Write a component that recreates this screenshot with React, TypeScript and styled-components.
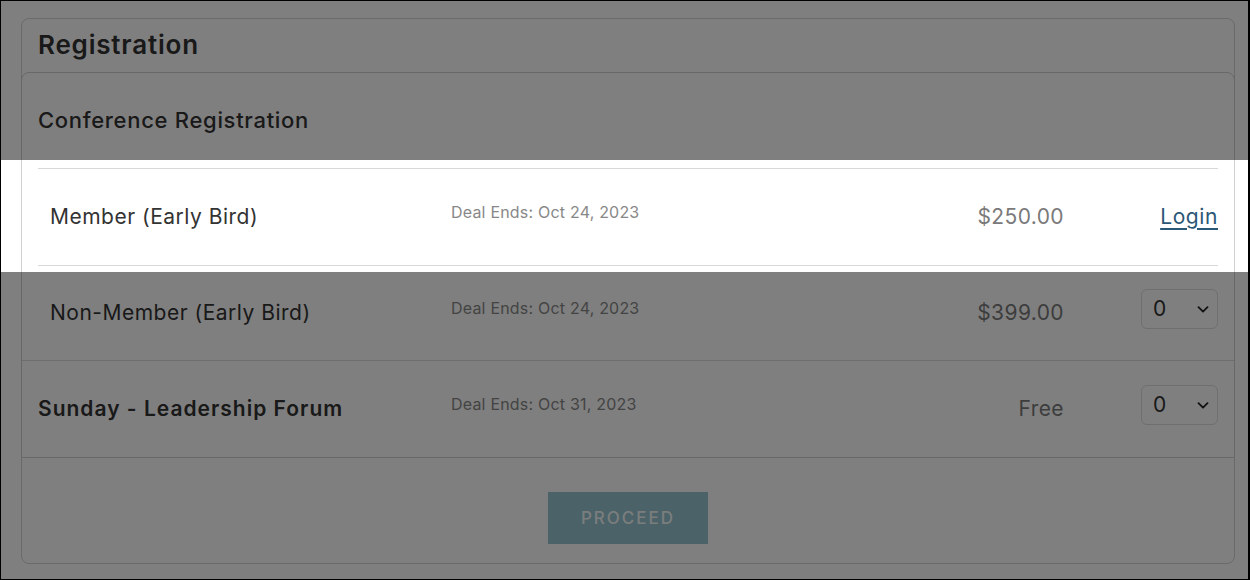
import styled, { createGlobalStyle } from 'styled-components';

const GlobalStyle = createGlobalStyle`
  html, body {
    margin: 0;
    padding: 0;
    background: #fff;
  }
  body {
    font-family: Inter, "Noto Sans", Arial, sans-serif;
    color: #333;
  }
  * {
    box-sizing: border-box;
  }
`;

// Page frame
const Frame = styled.div`
  position: relative;
  width: 1250px;
  height: 580px;
  overflow: hidden;
  border: 1px solid #000;
  border-right-width: 2px;
  background: #fff;
  padding: 17px 13px 0 20px;
`;

// Tour spotlight: dims everything but the highlighted strip
const Spotlight = styled.div`
  position: absolute;
  left: 0;
  right: 0;
  top: 159px;
  height: 112px;
  box-shadow: 0 0 0 2000px rgba(0, 0, 0, 0.5);
  pointer-events: none;
  z-index: 10;
`;

const OuterCard = styled.div`
  border: 1px solid #d4d4d4;
  border-radius: 8px;
  height: 546px;
  display: flex;
  flex-direction: column;
`;

const CardTitle = styled.h1`
  margin: 0;
  padding: 11px 16px 12px;
  font-size: 26px;
  line-height: 30px;
  font-weight: 600;
  letter-spacing: 0.8px;
  color: #333;
`;

const InnerCard = styled.div`
  margin: 0 -1px;
  border: 1px solid #d0d0d0;
  border-radius: 8px 8px 0 0;
`;

const Section = styled.div<{ $last?: boolean }>`
  border-bottom: ${(p) => (p.$last ? 'none' : '1px solid #dcdcdc')};
`;

const SectionHeader = styled.div`
  height: 95px;
  padding: 0 16px 2px;
  display: flex;
  align-items: center;
  font-size: 22px;
  font-weight: 500;
  letter-spacing: 0.7px;
  color: #333;
`;

const TicketList = styled.div`
  padding: 0 16px;
`;

const TicketRow = styled.div<{ $lined?: boolean; $height: number }>`
  display: grid;
  grid-template-columns: 413px 1fr 180px 154px;
  align-items: center;
  height: ${(p) => p.$height}px;
  padding-bottom: 2px;
  border-top: ${(p) => (p.$lined ? '1px solid #d8d8d8' : 'none')};
`;

const TicketName = styled.div<{ $bold?: boolean }>`
  padding-left: ${(p) => (p.$bold ? '0' : '12px')};
  font-size: 21px;
  font-weight: ${(p) => (p.$bold ? 600 : 400)};
  color: #333;
  letter-spacing: ${(p) => (p.$bold ? '1px' : '0.5px')};
`;

const DealEnds = styled.div`
  font-size: 16px;
  color: #888;
  letter-spacing: 0.2px;
  margin-bottom: 8px;
`;

const Price = styled.div`
  text-align: right;
  font-size: 21px;
  letter-spacing: 0.4px;
  color: #7a7a7a;
`;

const Action = styled.div`
  display: flex;
  justify-content: flex-end;
`;

const LoginLink = styled.a`
  font-size: 21px;
  letter-spacing: 0.6px;
  color: #2b5876;
  text-decoration: underline;
  text-decoration-thickness: 2px;
  text-underline-offset: 4px;
  cursor: pointer;
`;

const SelectWrap = styled.div`
  position: relative;
  width: 77px;
  height: 40px;
  margin-bottom: 6px;
`;

const Select = styled.select`
  appearance: none;
  width: 100%;
  height: 100%;
  border: 1px solid #dedede;
  border-radius: 6px;
  background: #fff;
  padding: 0 0 2px 11px;
  font-family: inherit;
  font-size: 21px;
  color: #333;
`;

const Chevron = styled.svg`
  position: absolute;
  right: 9px;
  top: 17px;
  pointer-events: none;
`;

const Footer = styled.div`
  flex: 1;
  display: flex;
  justify-content: center;
  padding-top: 34px;
`;

const ProceedButton = styled.button`
  width: 160px;
  height: 52px;
  border: none;
  background: #94c5d1;
  color: #f6fafb;
  font-family: inherit;
  font-size: 17px;
  font-weight: 500;
  letter-spacing: 2px;
`;

const QtySelect = () => (
  <SelectWrap>
    <Select defaultValue="0">
      <option value="0">0</option>
      <option value="1">1</option>
      <option value="2">2</option>
    </Select>
    <Chevron width="12" height="7" viewBox="0 0 12 7">
      <path d="M1.5 1.2 6 5.6 10.5 1.2" fill="none" stroke="#222" strokeWidth="1.8" strokeLinecap="round" strokeLinejoin="round" />
    </Chevron>
  </SelectWrap>
);

const App = () => {
  return (
    <>
      <GlobalStyle />
      <Frame>
        <OuterCard>
          <CardTitle>Registration</CardTitle>
          <InnerCard>
            <Section>
              <SectionHeader>Conference Registration</SectionHeader>
              <TicketList>
                <TicketRow $lined $height={97}>
                  <TicketName>Member (Early Bird)</TicketName>
                  <DealEnds>Deal Ends: Oct 24, 2023</DealEnds>
                  <Price>$250.00</Price>
                  <Action>
                    <LoginLink>Login</LoginLink>
                  </Action>
                </TicketRow>
                <TicketRow $lined $height={95}>
                  <TicketName>Non-Member (Early Bird)</TicketName>
                  <DealEnds>Deal Ends: Oct 24, 2023</DealEnds>
                  <Price>$399.00</Price>
                  <Action>
                    <QtySelect />
                  </Action>
                </TicketRow>
              </TicketList>
            </Section>
            <Section $last>
              <TicketList>
                <TicketRow $height={96}>
                  <TicketName $bold>Sunday - Leadership Forum</TicketName>
                  <DealEnds>Deal Ends: Oct 31, 2023</DealEnds>
                  <Price>Free</Price>
                  <Action>
                    <QtySelect />
                  </Action>
                </TicketRow>
              </TicketList>
            </Section>
          </InnerCard>
          <Footer>
            <ProceedButton>PROCEED</ProceedButton>
          </Footer>
        </OuterCard>
        <Spotlight />
      </Frame>
    </>
  );
};

export default App;
